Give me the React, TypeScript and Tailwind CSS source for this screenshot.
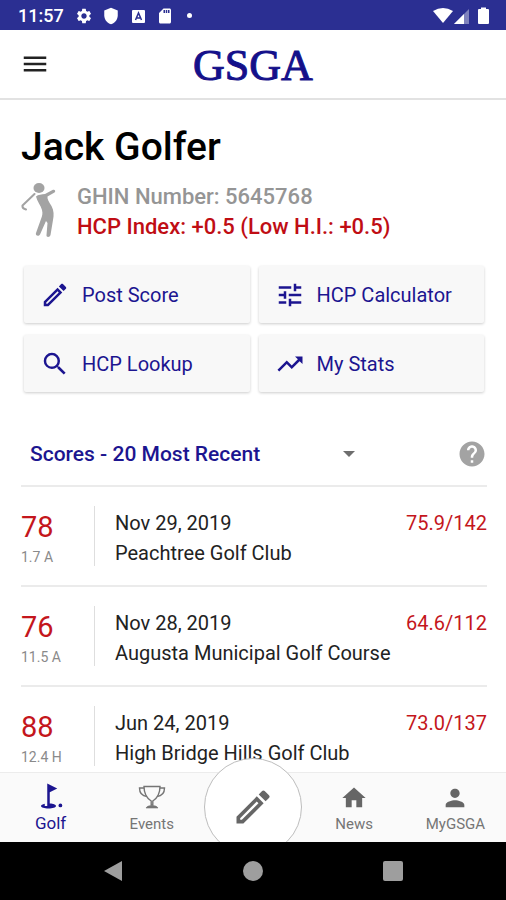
import React, { useState } from 'react';
import {
  MdGolfCourse,
  MdHelp,
  MdHome,
  MdMenu,
  MdOutlineEdit,
  MdPerson,
  MdSdCard,
  MdSearch,
  MdSettings,
  MdTrendingUp,
  MdTune,
} from 'react-icons/md';

const actions = [
  { label: 'Post Score', icon: MdOutlineEdit },
  { label: 'HCP Calculator', icon: MdTune },
  { label: 'HCP Lookup', icon: MdSearch },
  { label: 'My Stats', icon: MdTrendingUp },
];

const scores = [
  { score: 78, diff: '1.7 A', date: 'Nov 29, 2019', course: 'Peachtree Golf Club', rating: '75.9/142' },
  { score: 76, diff: '11.5 A', date: 'Nov 28, 2019', course: 'Augusta Municipal Golf Course', rating: '64.6/112' },
  { score: 88, diff: '12.4 H', date: 'Jun 24, 2019', course: 'High Bridge Hills Golf Club', rating: '73.0/137' },
];

function GolferIcon() {
  return (
    <svg viewBox="0 0 36 56" className="h-14 w-9 shrink-0" fill="#a3a3a3" aria-hidden="true">
      <ellipse cx="18" cy="6" rx="5.5" ry="5" />
      <path d="M15 14.5C17 12.5 21 12.5 24 12L32 7.800C34 7.200 35 9.500 33.500 10.500L26.500 14.500C26 17 28 20 30.500 24C33 29 33 33 32 38L29.500 53C29 55.500 25 55.500 25.500 53L26.500 41L25 39L19 52.500C17.500 55 14 53.500 15 51L20 37C21 34 22 32 21 28C20 24 16 19 15 14.500Z" />
      <path d="M13.500 12L1.500 23.500Q1 26.500 5 27.500" fill="none" stroke="#a3a3a3" strokeWidth="2" strokeLinecap="round" />
    </svg>
  );
}

function TrophyIcon() {
  return (
    <svg viewBox="0 0 28 28" className="h-7 w-7" fill="none" stroke="currentColor" strokeWidth="1.4" aria-hidden="true">
      <path d="M6 2.500H22C22 9 19.500 14 14.800 17V21H13.200V17C8.500 14 6 9 6 2.500Z" />
      <path d="M6 4H1.500C1.500 9 4.500 12 9 12.500M22 4H26.500C26.500 9 23.500 12 19 12.500" />
      <path d="M8 24C9 22.300 11 21.600 14 21.600S19 22.300 20 24Z" fill="currentColor" strokeWidth="0.6" />
    </svg>
  );
}

function StatusBar() {
  return (
    <div className="flex h-[30px] shrink-0 items-center bg-[#2b2f92] pt-px pr-4 pl-[18px] text-white">
      <span className="text-[18px] leading-5 font-medium">11:57</span>
      <div className="ml-[11px] flex items-center gap-[9px]">
        <MdSettings className="h-[18px] w-[18px]" />
        <svg viewBox="0 0 24 24" className="h-[18px] w-[18px]" fill="currentColor" aria-hidden="true">
          <path d="M12 1L3 4.500V11C3 16.500 6.800 21.700 12 23C17.200 21.700 21 16.500 21 11V4.500Z" />
        </svg>
        <svg viewBox="0 0 18 18" className="h-[18px] w-[18px]" aria-hidden="true">
          <rect x="3" y="3" width="13" height="13" rx="1" fill="#fff" />
          <path d="M6.500 13L9.500 6L12.500 13M8 11H11" fill="none" stroke="#2b2f92" strokeWidth="1.500" />
        </svg>
        <MdSdCard className="h-[18px] w-[18px]" />
        <span className="ml-1 h-[5px] w-[5px] rounded-full bg-white" />
      </div>
      <svg viewBox="0 0 58 18" className="ml-auto h-[18px] w-[58px]" fill="#fff" aria-hidden="true">
        <path d="M1 4Q11 -2 21 4L11 16Z" />
        <path d="M22 17L37 2V17Z" opacity="0.4" />
        <path d="M22 17L32 7V17Z" />
        <path d="M49 2V0.500H54V2H56Q57 2 57 3V16Q57 17 56 17H47Q46 17 46 16V3Q46 2 47 2Z" />
      </svg>
    </div>
  );
}

function NavItem({ label, active, children }: { label: string; active?: boolean; children: React.ReactNode }) {
  return (
    <a
      href="#"
      className={
        active
          ? 'flex flex-col items-center pt-2 text-[17px] leading-6 text-[#1c1590]'
          : 'flex flex-col items-center pt-[11px] text-[15px] leading-6 text-[#757575]'
      }
    >
      {children}
      <span>{label}</span>
    </a>
  );
}

export default function App() {
  const [filter, setFilter] = useState('recent');

  return (
    <div className="flex h-screen flex-col overflow-hidden bg-white font-['Roboto',sans-serif] text-black">
      <StatusBar />

      <header className="grid h-[70px] shrink-0 grid-cols-[1fr_auto_1fr] items-center border-b-2 border-[#e2e2e2] px-5">
        <button type="button" aria-label="Menu" className="justify-self-start">
          <MdMenu className="h-[30px] w-[30px] text-[#222]" />
        </button>
        <span className="pt-1 font-['Liberation_Serif',serif] text-[44px] leading-none text-[#14108a] [-webkit-text-stroke:1px_#14108a]">
          GSGA
        </span>
      </header>

      <main className="min-h-0 flex-1 overflow-hidden pr-[19px] pl-[21px]">
        <h1 className="mt-6 text-[39px] leading-[46px] font-medium">Jack Golfer</h1>

        <div className="mt-3 flex gap-5">
          <GolferIcon />
          <div className="text-[22px] leading-[30px] font-medium">
            <p className="text-[#959595]">GHIN Number: 5645768</p>
            <p className="text-[#c00d14]">HCP Index: +0.5 (Low H.I.: +0.5)</p>
          </div>
        </div>

        <div className="mt-6 grid grid-cols-2 gap-x-[9px] gap-y-3 px-[3px]">
          {actions.map(({ label, icon: Icon }) => (
            <button
              key={label}
              type="button"
              className="flex h-[57px] items-center gap-3 rounded-xs bg-[#f8f8f8] px-4 pt-px text-[20px] text-[#1c1590] shadow-[0_1px_3px_rgba(0,0,0,0.2)]"
            >
              <Icon className="h-[30px] w-[30px]" />
              {label}
            </button>
          ))}
        </div>

        <div className="mt-[34px] flex h-[61px] items-center justify-between border-b-2 border-[#ebebeb] pb-1">
          <div className="relative w-[340px]">
            <select
              aria-label="Scores filter"
              value={filter}
              onChange={(e) => setFilter(e.target.value)}
              className="w-full appearance-none bg-transparent pl-[9px] text-[21px] leading-8 font-medium text-[#1c1590]"
            >
              <option value="recent">Scores - 20 Most Recent</option>
              <option value="all">Scores - All</option>
            </select>
            <svg viewBox="0 0 12 6" className="pointer-events-none absolute top-1/2 right-[6px] h-[6px] w-3 -translate-y-1/2" fill="#6e6e6e" aria-hidden="true">
              <path d="M0 0H12L6 6Z" />
            </svg>
          </div>
          <button type="button" aria-label="Help">
            <MdHelp className="h-[30px] w-[30px] text-[#a3a3a3]" />
          </button>
        </div>

        <ul>
          {scores.map((s) => (
            <li key={s.date} className="flex h-[100px] items-center border-b-2 border-[#ebebeb]">
              <div className="flex h-[60px] w-[74px] shrink-0 flex-col border-r border-[#dedede] pt-1">
                <span className="text-[29px] leading-[35px] text-[#c4161c]">{s.score}</span>
                <span className="text-[14px] leading-6 text-[#8a8a8a]">{s.diff}</span>
              </div>
              <div className="flex-1 pt-1 pl-5 text-[20px] leading-[30px] text-[#222]">
                <div className="flex justify-between">
                  <span>{s.date}</span>
                  <span className="text-[#c4161c]">{s.rating}</span>
                </div>
                <p>{s.course}</p>
              </div>
            </li>
          ))}
        </ul>
      </main>

      <nav className="relative grid h-[70px] shrink-0 grid-cols-5 border-t border-[#ececec] bg-[#fafafa]">
        <NavItem label="Golf" active>
          <MdGolfCourse className="h-[30px] w-[30px]" />
        </NavItem>
        <NavItem label="Events">
          <TrophyIcon />
        </NavItem>
        <button
          type="button"
          aria-label="Post Score"
          className="absolute -top-[15px] left-1/2 flex h-[98px] w-[98px] -translate-x-1/2 items-center justify-center rounded-full border border-[#bdbdbd] bg-white"
        >
          <MdOutlineEdit className="h-11 w-11 text-[#666]" />
        </button>
        <span />
        <NavItem label="News">
          <MdHome className="h-7 w-7 text-[#666]" />
        </NavItem>
        <NavItem label="MyGSGA">
          <MdPerson className="h-7 w-7 text-[#666]" />
        </NavItem>
      </nav>

      <div className="relative flex h-[58px] shrink-0 items-center justify-center gap-[120px] bg-black">
        <button type="button" aria-label="Back">
          <svg viewBox="0 0 20 20" className="h-5 w-5" fill="#9e9e9e">
            <path d="M19 0V20L1 10Z" />
          </svg>
        </button>
        <button type="button" aria-label="Home" className="h-5 w-5 rounded-full bg-[#9e9e9e]" />
        <button type="button" aria-label="Recent apps" className="h-5 w-5 rounded-xs bg-[#9e9e9e]" />
      </div>
    </div>
  );
}
